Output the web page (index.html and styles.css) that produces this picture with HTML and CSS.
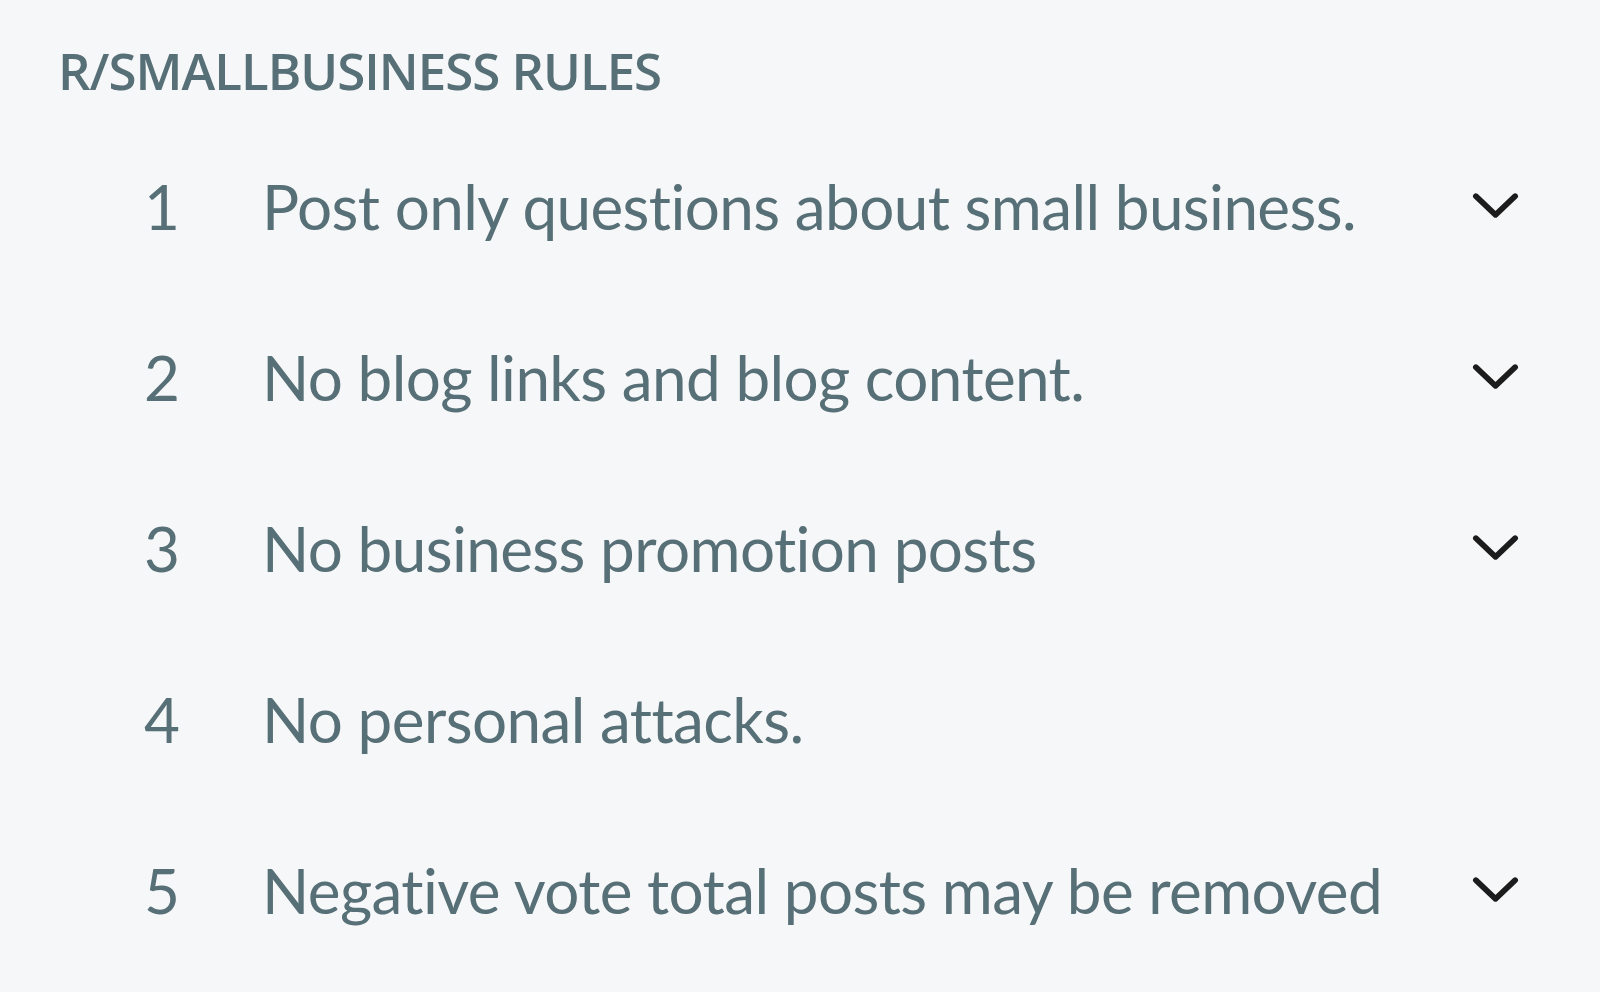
FILE: index.html
```html
<!DOCTYPE html>
<html lang="en">
<head>
<meta charset="utf-8">
<title>r/smallbusiness rules</title>
<link rel="stylesheet" href="styles.css">
</head>
<body>
<section class="rules">
  <h2 class="rules-title">R/SMALLBUSINESS RULES</h2>
  <ol class="rule-list">
    <li class="rule">
      <span class="rule-num">1</span>
      <span class="rule-text">Post only questions about small business.</span>
      <svg class="chev" viewBox="0 0 48 26" aria-hidden="true"><path d="M3 3 L24 23 L45 3"/></svg>
    </li>
    <li class="rule">
      <span class="rule-num">2</span>
      <span class="rule-text">No blog links and blog content.</span>
      <svg class="chev" viewBox="0 0 48 26" aria-hidden="true"><path d="M3 3 L24 23 L45 3"/></svg>
    </li>
    <li class="rule">
      <span class="rule-num">3</span>
      <span class="rule-text">No business promotion posts</span>
      <svg class="chev" viewBox="0 0 48 26" aria-hidden="true"><path d="M3 3 L24 23 L45 3"/></svg>
    </li>
    <li class="rule">
      <span class="rule-num">4</span>
      <span class="rule-text">No personal attacks.</span>
      <span class="chev-space"></span>
    </li>
    <li class="rule">
      <span class="rule-num">5</span>
      <span class="rule-text">Negative vote total posts may be removed</span>
      <svg class="chev" viewBox="0 0 48 26" aria-hidden="true"><path d="M3 3 L24 23 L45 3"/></svg>
    </li>
  </ol>
</section>
</body>
</html>
```
FILE: styles.css
```css
html, body {
  margin: 0;
  padding: 0;
  background: #f6f7f8;
}
body {
  font-family: "Open Sans", "Noto Sans", sans-serif;
  color: #576f76;
}
.rules {
  padding: 34px 82px 0 58px;
}
.rules-title {
  margin: 0;
  font-size: 51px;
  font-weight: 600;
  line-height: 72px;
  letter-spacing: -1px;
}
.rule-list {
  list-style: none;
  margin: 0;
  padding: 14px 0 0 0;
}
.rule {
  display: grid;
  grid-template-columns: 118px 1fr 45px;
  align-items: center;
  height: 171px;
  padding-left: 86px;
}
.rule-num,
.rule-text {
  font-family: Lato, "Open Sans", sans-serif;
  font-size: 62px;
  font-weight: 400;
  line-height: 80px;
  letter-spacing: -0.6px;
  font-variant-ligatures: none;
  font-feature-settings: "liga" 0, "dlig" 0;
}
.chev {
  width: 45px;
  height: 25px;
  fill: none;
  stroke: #1c1c1c;
  stroke-width: 6;
  stroke-linecap: round;
  stroke-linejoin: round;
  overflow: visible;
}
```
